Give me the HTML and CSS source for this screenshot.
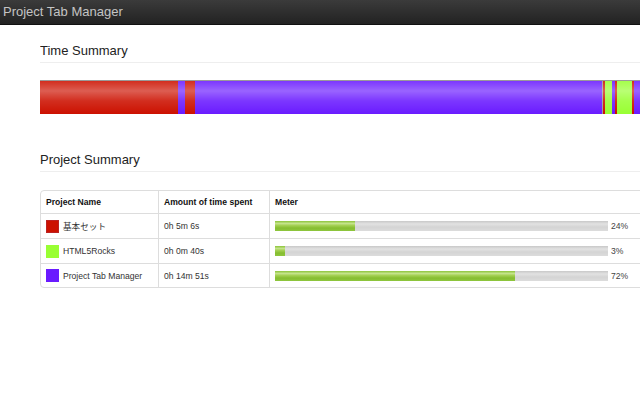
FILE: index.html
```html
<!DOCTYPE html>
<html>
<head>
<meta charset="utf-8">
<link rel="stylesheet" href="styles.css">
</head>
<body>
<div class="topbar"><span class="brand">Project Tab Manager</span></div>
<div class="container">
  <h2 class="section-title">Time Summary</h2>
  <div class="timebar">
    <div class="seg red" style="width:138px"></div>
    <div class="seg purple" style="width:7px"></div>
    <div class="seg red" style="width:10px"></div>
    <div class="seg purple" style="width:407px"></div>
    <div class="seg gray" style="width:1px"></div>
    <div class="seg red" style="width:2px"></div>
    <div class="seg green" style="width:7px"></div>
    <div class="seg purple" style="width:3px"></div>
    <div class="seg red" style="width:2px"></div>
    <div class="seg green" style="width:15px"></div>
    <div class="seg red" style="width:2px"></div>
    <div class="seg purple" style="width:6px"></div>
  </div>

  <h2 class="section-title second">Project Summary</h2>
  <table class="summary">
    <thead>
      <tr>
        <th class="c-name">Project Name</th>
        <th class="c-time">Amount of time spent</th>
        <th class="c-meter">Meter</th>
      </tr>
    </thead>
    <tbody>
      <tr>
        <td><div class="proj"><span class="swatch sw-red"></span>基本セット</div></td>
        <td>0h 5m 6s</td>
        <td><div class="meter"><div class="track"><div class="fill" style="width:24%"></div></div><span class="pct">24%</span></div></td>
      </tr>
      <tr>
        <td><div class="proj"><span class="swatch sw-green"></span>HTML5Rocks</div></td>
        <td>0h 0m 40s</td>
        <td><div class="meter"><div class="track"><div class="fill" style="width:3%"></div></div><span class="pct">3%</span></div></td>
      </tr>
      <tr class="last">
        <td><div class="proj"><span class="swatch sw-purple"></span>Project Tab Manager</div></td>
        <td>0h 14m 51s</td>
        <td><div class="meter"><div class="track"><div class="fill" style="width:72%"></div></div><span class="pct">72%</span></div></td>
      </tr>
    </tbody>
  </table>
</div>
</body>
</html>
```
FILE: styles.css
```css
html, body {
  margin: 0;
  padding: 0;
  background: #fff;
  overflow: hidden;
  width: 640px;
  height: 400px;
}
body {
  font-family: "Liberation Sans", Arial, "Noto Sans CJK JP", sans-serif;
  color: #333;
}
.topbar {
  height: 25px;
  background: linear-gradient(to bottom, #3b3b3b, #222);
  border-bottom: 1px solid #111;
  box-sizing: border-box;
  display: flex;
  align-items: center;
  padding-left: 3px;
}
.brand {
  color: #c4c4c4;
  font-size: 13px;
  line-height: 16px;
}
.container {
  width: 600px;
  margin-left: 40px;
  overflow: hidden;
}
.section-title {
  width: 640px;
  margin: 17px 0 0;
  font-size: 13px;
  line-height: 18px;
  font-weight: normal;
  color: #222;
  padding-bottom: 2px;
  border-bottom: 1px solid #eee;
}
.section-title.second {
  margin-top: 37px;
}
.timebar {
  margin-top: 17px;
  height: 34px;
  display: flex;
  border-top: 1px solid #9a9a9a;
  box-sizing: border-box;
}
.seg {
  flex: none;
  height: 100%;
  background-image: linear-gradient(to bottom, rgba(255,255,255,0.12) 0%, rgba(255,255,255,0.32) 30%, rgba(255,255,255,0.12) 60%, rgba(0,0,0,0) 100%);
}
.seg.red { background-color: #cc1100; }
.seg.purple { background-color: #6a1bff; }
.seg.green { background-color: #99ff33; }
.seg.gray { background-color: #999; }

.summary {
  margin-top: 18px;
  width: 640px;
  border-collapse: separate;
  border-spacing: 0;
  border: 1px solid #ddd;
  border-radius: 4px;
  font-size: 8.6px;
  color: #333;
}
.summary th, .summary td {
  text-align: left;
  padding: 0 5px;
  border-left: 1px solid #ddd;
  border-top: 1px solid #ddd;
  vertical-align: middle;
}
.summary th:first-child, .summary td:first-child {
  border-left: none;
}
.summary thead th {
  border-top: none;
  font-weight: bold;
  color: #111;
  height: 22px;
}
.summary tbody td {
  height: 24px;
}
.summary tbody tr.last td {
  height: 23px;
}
.c-name { width: 107px; }
.c-time { width: 100px; }
.proj {
  display: flex;
  align-items: center;
  gap: 4px;
}
.swatch {
  width: 13px;
  height: 13px;
  box-sizing: border-box;
  flex: none;
}
.sw-red { background: #cc1100; border: 1px solid #b22; }
.sw-green { background: #99ff33; }
.sw-purple { background: #6a1bff; }
.meter {
  display: flex;
  align-items: center;
  gap: 3px;
}
.track {
  width: 333px;
  height: 10px;
  flex: none;
  background: linear-gradient(to bottom, #c8c8c8 0%, #e2e2e2 30%, #d4d4d4 60%, #dcdcdc 100%);
}
.fill {
  height: 100%;
  background: linear-gradient(to bottom, #8cc43a 0%, #c4e38a 25%, #a3d052 45%, #86bd30 70%, #8ec63e 100%);
}
.pct {
  color: #444;
}
```
